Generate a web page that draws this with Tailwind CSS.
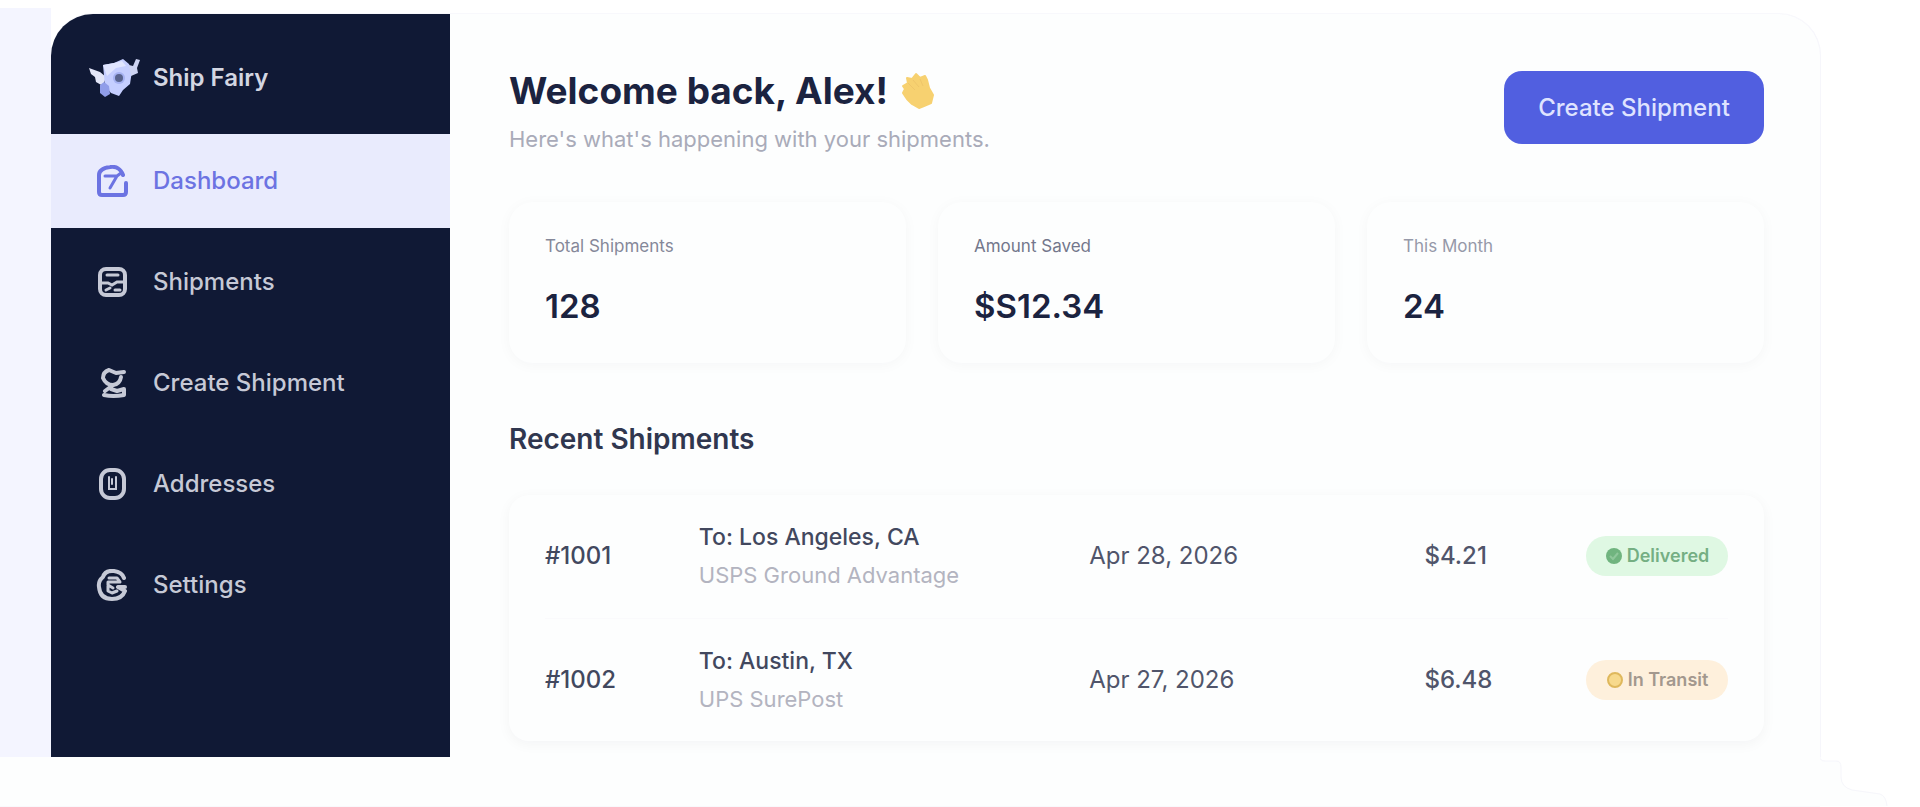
<!DOCTYPE html>
<html lang="en">
<head>
    <meta charset="UTF-8">
    <meta name="viewport" content="width=device-width, initial-scale=1.0">
    <title>Dashboard - Ship Fairy</title>
    <script src="https://cdn.jsdelivr.net/npm/@tailwindcss/browser@4"></script>
</head>
<body class="bg-white font-['Inter',sans-serif] text-[#1b2340] overflow-x-hidden">
    <div class="flex pr-[99px]">
        <!-- Page edge -->
        <div class="w-[51px] shrink-0 mt-2 bg-[#f4f5ff]"></div>

        <div class="flex flex-1 mt-[14px] min-h-[743px] rounded-t-[42px] border-r border-[#f6f6fb] bg-[#fdfefe] shadow-[0_-1px_0_#f8f8fc]">
            <!-- Sidebar -->
            <aside class="w-[399px] shrink-0 bg-[#101935] rounded-tl-[42px]">
                <div class="flex items-center gap-3 h-[120px] pl-9 pb-2 pt-4">
                    <svg class="w-[54px] h-[42px]" viewBox="0 0 54 42" fill="none">
                        <path d="M2 11L13 15L19 20L16 29L9 25L8 20L4 17Z" fill="#e3e6f8"/>
                        <path d="M16 8L27 6L36 2L42 7L45 14L43 27L36 33L32 39L24 36L18 29Z" fill="#c5ceff"/>
                        <path d="M16 8L27 6L35 4L39 9L29 11L20 19Z" fill="#e0e5ff"/>
                        <path d="M13 28L17 25L22 29L23 37L18 40L13 36Z" fill="#909de9"/>
                        <path d="M42 8L46 9L49 2L53 3L50 11L51 16L44 19Z" fill="#cdd3f2"/>
                        <circle cx="32" cy="21" r="6" fill="#a6b2f2"/>
                        <circle cx="32" cy="21" r="4" fill="#59648e"/>
                    </svg>
                    <span class="text-2xl font-semibold text-[#d3d6e2]">Ship Fairy</span>
                </div>
                <nav class="flex flex-col gap-[7px] text-2xl font-medium text-[#c6c9d6]">
                    <a href="#" class="flex items-center gap-[25px] h-[94px] pl-[45px] bg-[#e9ebfd] text-[#6c73e2]">
                        <svg class="w-8 h-8" viewBox="0 0 32 32" fill="none" stroke="currentColor" stroke-width="4" stroke-linecap="round" stroke-linejoin="round">
                            <path d="M27 10C25 4 20 1 14 2C7 3 3 5 3 10V27Q3 30 6 30H27Q30 30 30 27V18"/>
                            <path d="M9 11H21L14 23M21 11L25 8" stroke-width="3"/>
                        </svg>
                        Dashboard
                    </a>
                    <a href="#" class="flex items-center gap-[25px] h-[94px] pl-[45px]">
                        <svg class="w-8 h-8" viewBox="0 0 32 32" fill="none" stroke="currentColor" stroke-width="4" stroke-linecap="round">
                            <rect x="4" y="3" width="25" height="26" rx="6"/>
                            <path d="M11 9H22M6 17H12L16 19L21 16H27M10 24L14 22M19 24H24" stroke-width="3"/>
                        </svg>
                        Shipments
                    </a>
                    <a href="#" class="flex items-center gap-[25px] h-[94px] pl-[45px]">
                        <svg class="w-8 h-8" viewBox="0 0 32 32" fill="none" stroke="currentColor" stroke-width="4" stroke-linecap="round" stroke-linejoin="round">
                            <path d="M28 5L20 6L13 3Q7 5 7 11Q10 18 17 18Q24 17 25 10"/>
                            <path d="M17 18L9 24M8 28Q17 30 28 28V22L21 24L15 22"/>
                        </svg>
                        Create Shipment
                    </a>
                    <a href="#" class="flex items-center gap-[25px] h-[94px] pl-[45px]">
                        <svg class="w-8 h-8" viewBox="0 0 32 32" fill="none" stroke="currentColor" stroke-width="4" stroke-linecap="round">
                            <rect x="5" y="2" width="23" height="28" rx="9"/>
                            <path d="M13 9V21H20V9M16 11V16" stroke-width="2"/>
                        </svg>
                        Addresses
                    </a>
                    <a href="#" class="flex items-center gap-[25px] h-[94px] pl-[45px]">
                        <svg class="w-8 h-8" viewBox="0 0 32 32" fill="none" stroke="currentColor" stroke-width="4" stroke-linecap="round" stroke-linejoin="round">
                            <path d="M28 9Q26 3 18 2Q9 1 7 8Q2 12 3 18Q4 30 16 30Q26 30 29 22L22 18H29"/>
                            <path d="M13 9H21L24 13H12V22L16 24L21 22M12 16L17 19" stroke-width="3"/>
                        </svg>
                        Settings
                    </a>
                </nav>
            </aside>

            <!-- Main content -->
            <main class="flex-1 pl-[59px] pr-14">
                <header class="flex items-start justify-between pt-[57px]">
                    <div>
                        <h1 class="flex items-center gap-3 text-[37px] leading-10 font-bold">
                            Welcome back, Alex!
                            <svg class="w-9 h-10" viewBox="0 0 36 40" fill="#f7d170" stroke="#f7d170" stroke-width="2" stroke-linejoin="round">
                                <path d="M3 15L8 12L7 7L12 8L16 3L20 7L25 5L27 9L29 17L33 24L31 32L24 35L19 37L12 33L7 28L3 22L5 18Z"/>
                                <path d="M8 12L15 19M13 9L19 16M20 8L23 15" stroke="#efc66a" stroke-width="1"/>
                            </svg>
                        </h1>
                        <p class="mt-3 text-[22px] leading-8 text-[#a9abb9]">Here's what's happening with your shipments.</p>
                    </div>
                    <button class="h-[73px] w-[260px] rounded-[18px] bg-[#515fe0] text-2xl font-medium text-[#dfe3ff]">Create Shipment</button>
                </header>

                <!-- Stats -->
                <section class="grid grid-cols-3 gap-8 mt-[47px]">
                    <div class="h-[161px] px-9 pt-8 rounded-3xl bg-[#fdfefe] shadow-[0_2px_14px_#10193509]">
                        <p class="text-[17px] leading-6 text-[#858899]">Total Shipments</p>
                        <p class="mt-7 text-[33px] leading-10 font-semibold">128</p>
                    </div>
                    <div class="h-[161px] px-9 pt-8 rounded-3xl bg-[#fdfefe] shadow-[0_2px_14px_#10193509]">
                        <p class="text-[17px] leading-6 text-[#73778c]">Amount Saved</p>
                        <p class="mt-7 text-[33px] leading-10 font-semibold">$S12.34</p>
                    </div>
                    <div class="h-[161px] px-9 pt-8 rounded-3xl bg-[#fdfefe] shadow-[0_2px_14px_#10193509]">
                        <p class="text-[17px] leading-6 text-[#9699a9]">This Month</p>
                        <p class="mt-7 text-[33px] leading-10 font-semibold">24</p>
                    </div>
                </section>

                <!-- Recent shipments -->
                <h2 class="mt-14 text-[28px] leading-10 font-semibold text-[#30374f]">Recent Shipments</h2>
                <div class="mt-9 px-9 rounded-[20px] bg-[#fdfefe] shadow-[0_3px_14px_#1019350b]">
                    <table class="w-full table-fixed text-left text-2xl text-[#50556b]">
                        <colgroup>
                            <col class="w-[13%]">
                            <col class="w-[33%]">
                            <col class="w-[28%]">
                            <col>
                            <col class="w-[142px]">
                        </colgroup>
                        <tbody>
                            <tr class="h-[123px] border-b border-[#fafafc]">
                                <td class="font-medium text-[#42485e]">#1001</td>
                                <td>
                                    <div class="text-[23px] leading-[38px] font-medium text-[#42485e]">To: Los Angeles, CA</div>
                                    <div class="text-[22px] leading-[38px] text-[#b3b4c0]">USPS Ground Advantage</div>
                                </td>
                                <td>Apr 28, 2026</td>
                                <td class="pl-1 font-medium">$4.21</td>
                                <td>
                                    <span class="flex items-center justify-center gap-1 h-10 rounded-full bg-[#dff8e3] text-lg font-semibold text-[#75af83]">
                                        <svg class="w-[18px] h-[18px]" viewBox="0 0 18 18" fill="none">
                                            <circle cx="9" cy="9" r="8" fill="#70b47f"/>
                                            <path d="M5 9L8 12L13 6" stroke="#8fc79b" stroke-width="2"/>
                                        </svg>
                                        Delivered
                                    </span>
                                </td>
                            </tr>
                            <tr class="h-[123px]">
                                <td class="font-medium text-[#42485e]">#1002</td>
                                <td>
                                    <div class="text-[23px] leading-[38px] font-medium text-[#42485e]">To: Austin, TX</div>
                                    <div class="text-[22px] leading-[38px] text-[#b3b4c0]">UPS SurePost</div>
                                </td>
                                <td>Apr 27, 2026</td>
                                <td class="pl-1 font-medium">$6.48</td>
                                <td>
                                    <span class="flex items-center justify-center gap-1 h-10 rounded-full bg-[#fef0dc] text-lg font-semibold text-[#a3988e]">
                                        <svg class="w-[18px] h-[18px]" viewBox="0 0 18 18" fill="none">
                                            <circle cx="9" cy="9" r="7" fill="#f7d98c" stroke="#dfb85c" stroke-width="2"/>
                                        </svg>
                                        In Transit
                                    </span>
                                </td>
                            </tr>
                        </tbody>
                    </table>
                </div>
            </main>
        </div>
    </div>

    <!-- Laptop base -->
    <div class="h-[50px] flex">
        <div class="flex-1 bg-[#fdfefe] border-b border-[#f9f9fc]"></div>
        <svg class="w-[100px] h-[50px]" viewBox="0 0 100 50">
            <path d="M0 0Q0 4 5 4H16Q21 4 21 10V20Q21 30 32 33L60 37Q66 39 67 49H0Z" fill="#fdfefe"/>
            <path d="M0 0Q0 4 5 4H16Q21 4 21 10V20Q21 30 32 33L60 37Q66 39 67 49" fill="none" stroke="#f6f6fb"/>
        </svg>
    </div>
</body>
</html>
